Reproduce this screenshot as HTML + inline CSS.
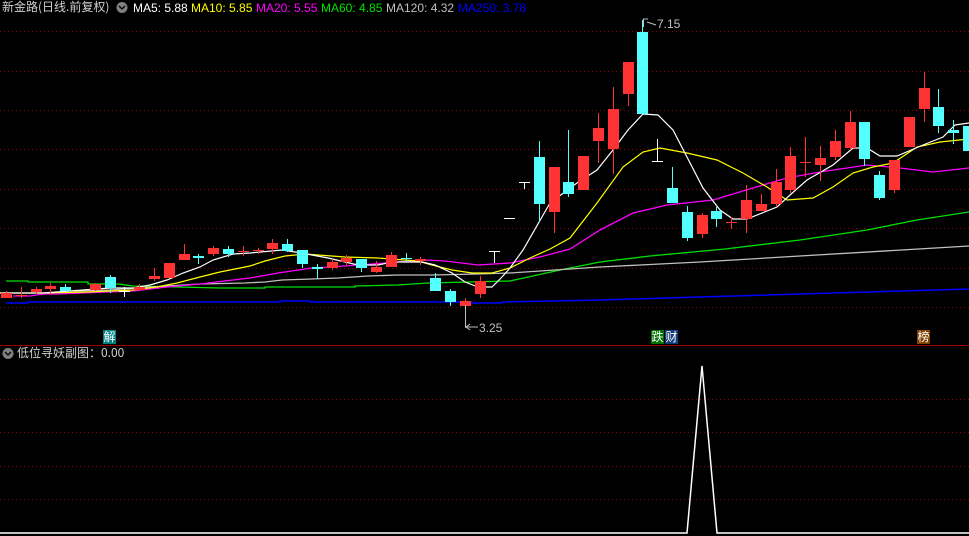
<!DOCTYPE html>
<html><head><meta charset="utf-8"><style>
html,body{margin:0;padding:0;background:#000;width:969px;height:536px;overflow:hidden}
svg{position:absolute;left:0;top:0}
.t{position:absolute;font-family:"Liberation Sans","Noto Sans CJK SC",sans-serif;font-size:12px;white-space:nowrap;line-height:14px}
.lb{position:absolute;font-family:"Noto Sans CJK SC",sans-serif;font-size:12px;color:#fff;width:13px;height:14px;line-height:14px;text-align:center;top:330px}
</style></head><body>
<svg width="969" height="536" xmlns="http://www.w3.org/2000/svg">
<g stroke="#8a0000" stroke-width="1" stroke-dasharray="1,3">
<line x1="0" y1="31.5" x2="969" y2="31.5"/><line x1="0" y1="71.5" x2="969" y2="71.5"/>
<line x1="0" y1="110.5" x2="969" y2="110.5"/><line x1="0" y1="149.5" x2="969" y2="149.5"/>
<line x1="0" y1="189.5" x2="969" y2="189.5"/><line x1="0" y1="228.5" x2="969" y2="228.5"/>
<line x1="0" y1="268.5" x2="969" y2="268.5"/><line x1="0" y1="307.5" x2="969" y2="307.5"/>
<line x1="0" y1="399.5" x2="969" y2="399.5"/><line x1="0" y1="432.5" x2="969" y2="432.5"/>
<line x1="0" y1="466.5" x2="969" y2="466.5"/><line x1="0" y1="499.5" x2="969" y2="499.5"/>
</g>
<line x1="0" y1="345.5" x2="969" y2="345.5" stroke="#a00000" stroke-width="1"/>
<g fill="none" stroke-width="1">
<polyline stroke="#0000ff" stroke-width="1.5" points="6,303 28,303 28,302 280,302 280,301 310,301 310,302 472,302 472,303 502,303 502,302 600,300 700,297 800,294 969,289"/>
<polyline stroke="#00e000" stroke-width="1.3" points="6,281 28,281 28,282 88,282 88,284 118,284 133,286 177,287 220,288 265,288 265,287 355,287 355,286 398,285 428,283 510,281 560,270 600,262 650,256 725,249 800,240 867,230 917,220 969,212"/>
<polyline stroke="#c0c0c0" stroke-width="1.3" points="73,291 110,290 150,287 200,284 245,283 265,282 282,280 312,279 338,278 368,276 398,275 432,275 478,274 510,273 600,267 700,262 800,256 969,246"/>
<polyline stroke="#ff00ff" stroke-width="1.3" points="13,296 30,296 43,294 57,294 83,293 133,291 167,287 200,284 233,280 250,278 278,273 312,268 345,266 385,263 425,260 445,261 478,265 510,263 540,257 570,249 600,230 633,213 667,205 713,200 753,188 787,178 820,172 867,165 900,168 933,172 969,168"/>
<polyline stroke="#ffff00" stroke-width="1.2" points="0,293 43,293 87,292 133,290 157,287 177,283 200,277 220,272 250,266 265,261 285,256 305,254 345,257 378,258 418,261 432,265 452,270 472,273 492,273 510,268 530,258 550,249 570,238 597,203 623,167 643,152 660,148 687,153 717,160 743,173 767,187 787,200 813,198 833,187 853,173 873,167 893,163 917,147 940,142 969,139"/>
<polyline stroke="#ffffff" stroke-width="1.2" points="0,293 43,293 83,290 110,288 133,288 150,285 167,280 183,273 200,267 213,260 233,254 250,253 282,250 295,252 312,255 328,258 345,262 358,265 378,265 392,262 422,262 435,265 452,273 465,282 478,287 492,287 502,277 510,268 523,250 550,203 577,183 597,170 613,150 628,130 643,114 658,115 673,130 703,188 720,210 733,219 747,219 777,207 790,195 807,180 833,165 853,148 867,148 880,156 897,156 923,145 943,137 955,125 969,123"/>
</g>
<g fill="#ff3333">
<rect x="1" y="293" width="11" height="5"/><rect x="6" y="291" width="1" height="7"/>
<rect x="16" y="295" width="11" height="1"/><rect x="21" y="287" width="1" height="11"/>
<rect x="31" y="289" width="11" height="3"/><rect x="36" y="287" width="1" height="7"/>
<rect x="45" y="286" width="11" height="3"/><rect x="50" y="283" width="1" height="11"/>
<rect x="90" y="284" width="11" height="6"/><rect x="95" y="283" width="1" height="8"/>
<rect x="134" y="287" width="11" height="3"/><rect x="139" y="284" width="1" height="7"/>
<rect x="149" y="276" width="11" height="3"/><rect x="154" y="268" width="1" height="13"/>
<rect x="164" y="263" width="11" height="15"/>
<rect x="179" y="254" width="11" height="6"/><rect x="184" y="244" width="1" height="16"/>
<rect x="208" y="248" width="11" height="6"/><rect x="213" y="246" width="1" height="10"/>
<rect x="238" y="251" width="11" height="1"/><rect x="243" y="246" width="1" height="10"/>
<rect x="253" y="250" width="11" height="1"/><rect x="258" y="248" width="1" height="6"/>
<rect x="267" y="243" width="11" height="6"/><rect x="272" y="239" width="1" height="15"/>
<rect x="327" y="262" width="11" height="6"/><rect x="332" y="259" width="1" height="11"/>
<rect x="341" y="258" width="11" height="4"/><rect x="346" y="255" width="1" height="10"/>
<rect x="371" y="267" width="11" height="5"/><rect x="376" y="261" width="1" height="12"/>
<rect x="386" y="255" width="11" height="12"/><rect x="391" y="252" width="1" height="15"/>
<rect x="415" y="259" width="11" height="2"/><rect x="420" y="257" width="1" height="8"/>
<rect x="460" y="301" width="11" height="5"/><rect x="465" y="298" width="1" height="30"/>
<rect x="475" y="281" width="11" height="13"/><rect x="480" y="276" width="1" height="22"/>
<rect x="549" y="167" width="11" height="45"/><rect x="554" y="167" width="1" height="66"/>
<rect x="578" y="156" width="11" height="34"/>
<rect x="593" y="128" width="11" height="13"/><rect x="598" y="113" width="1" height="50"/>
<rect x="608" y="109" width="11" height="40"/><rect x="613" y="87" width="1" height="87"/>
<rect x="623" y="62" width="11" height="32"/><rect x="628" y="62" width="1" height="44"/>
<rect x="697" y="215" width="11" height="19"/><rect x="702" y="213" width="1" height="25"/>
<rect x="726" y="222" width="11" height="1"/><rect x="731" y="217" width="1" height="12"/>
<rect x="741" y="200" width="11" height="19"/><rect x="746" y="185" width="1" height="48"/>
<rect x="756" y="204" width="11" height="7"/><rect x="761" y="194" width="1" height="17"/>
<rect x="771" y="182" width="11" height="22"/><rect x="776" y="169" width="1" height="38"/>
<rect x="785" y="156" width="11" height="34"/><rect x="790" y="147" width="1" height="46"/>
<rect x="800" y="162" width="11" height="1"/><rect x="805" y="137" width="1" height="40"/>
<rect x="815" y="158" width="11" height="7"/><rect x="820" y="146" width="1" height="35"/>
<rect x="830" y="141" width="11" height="16"/><rect x="835" y="130" width="1" height="30"/>
<rect x="845" y="122" width="11" height="26"/><rect x="850" y="111" width="1" height="39"/>
<rect x="889" y="160" width="11" height="30"/><rect x="894" y="160" width="1" height="33"/>
<rect x="904" y="117" width="11" height="30"/>
<rect x="919" y="88" width="11" height="21"/><rect x="924" y="72" width="1" height="50"/>
</g>
<g fill="#54ffff">
<rect x="60" y="287" width="11" height="4"/><rect x="65" y="284" width="1" height="7"/>
<rect x="105" y="277" width="11" height="11"/><rect x="110" y="275" width="1" height="18"/>
<rect x="193" y="256" width="11" height="2"/><rect x="198" y="254" width="1" height="10"/>
<rect x="223" y="249" width="11" height="5"/><rect x="228" y="246" width="1" height="11"/>
<rect x="282" y="244" width="11" height="7"/><rect x="287" y="239" width="1" height="13"/>
<rect x="297" y="250" width="11" height="14"/><rect x="302" y="250" width="1" height="18"/>
<rect x="312" y="267" width="11" height="2"/><rect x="317" y="264" width="1" height="15"/>
<rect x="356" y="259" width="11" height="9"/><rect x="361" y="259" width="1" height="13"/>
<rect x="401" y="258" width="11" height="1"/><rect x="406" y="253" width="1" height="9"/>
<rect x="430" y="278" width="11" height="13"/><rect x="435" y="273" width="1" height="18"/>
<rect x="445" y="291" width="11" height="11"/><rect x="450" y="289" width="1" height="17"/>
<rect x="534" y="157" width="11" height="47"/><rect x="539" y="141" width="1" height="81"/>
<rect x="563" y="182" width="11" height="12"/><rect x="568" y="130" width="1" height="67"/>
<rect x="637" y="32" width="11" height="82"/><rect x="642" y="20" width="1" height="94"/>
<rect x="667" y="188" width="11" height="15"/><rect x="672" y="167" width="1" height="36"/>
<rect x="682" y="212" width="11" height="26"/><rect x="687" y="206" width="1" height="35"/>
<rect x="711" y="211" width="11" height="8"/><rect x="716" y="207" width="1" height="20"/>
<rect x="859" y="122" width="11" height="37"/><rect x="864" y="122" width="1" height="44"/>
<rect x="874" y="175" width="11" height="23"/><rect x="879" y="171" width="1" height="29"/>
<rect x="933" y="107" width="11" height="19"/><rect x="938" y="89" width="1" height="44"/>
<rect x="948" y="130" width="11" height="3"/><rect x="953" y="120" width="1" height="24"/>
<rect x="963" y="126" width="6" height="25"/>
</g>
<g fill="#ffffff">
<rect x="119" y="291" width="11" height="1"/><rect x="124" y="287" width="1" height="10"/>
<rect x="489" y="251" width="11" height="1"/><rect x="494" y="251" width="1" height="12"/>
<rect x="504" y="218" width="11" height="1"/>
<rect x="519" y="182" width="11" height="1"/><rect x="524" y="182" width="1" height="7"/>
<rect x="652" y="161" width="11" height="1"/><rect x="657" y="139" width="1" height="22"/>
</g>
<g stroke="#c0c0c0" fill="none" stroke-width="1">
<polyline points="643.5,27 643.5,19 648,19"/><line x1="647" y1="22" x2="656" y2="25"/>
<polyline points="465.5,305 465.5,327 478,327"/><line x1="466" y1="327" x2="470" y2="324"/><line x1="466" y1="327" x2="470" y2="330"/>
</g>
<polyline fill="none" stroke="#ffffff" stroke-width="1.5" points="0,533 687,533 702,366 717,533 969,533"/>
<circle cx="122" cy="7.5" r="5.5" fill="#808080"/><polyline points="119,6 122,9 125,6" fill="none" stroke="#000" stroke-width="1.3"/>
<circle cx="8" cy="353.5" r="5.5" fill="#808080"/><polyline points="5,352 8,355 11,352" fill="none" stroke="#000" stroke-width="1.3"/>
</svg>
<div class="t" style="left:2px;top:0;color:#d0d0d0;font-family:'Noto Sans CJK SC',sans-serif">新金路(日线.前复权)</div>
<div class="t" style="left:133px;top:1px;color:#fff">MA5: 5.88</div>
<div class="t" style="left:191px;top:1px;color:#ffff00">MA10: 5.85</div>
<div class="t" style="left:256px;top:1px;color:#ff00ff">MA20: 5.55</div>
<div class="t" style="left:321px;top:1px;color:#00e000">MA60: 4.85</div>
<div class="t" style="left:386px;top:1px;color:#c0c0c0">MA120: 4.32</div>
<div class="t" style="left:458px;top:1px;color:#0000ff">MA250: 3.78</div>
<div class="t" style="left:657px;top:17px;color:#c0c0c0">7.15</div>
<div class="t" style="left:479px;top:321px;color:#c0c0c0">3.25</div>
<div class="t" style="left:17px;top:346px;color:#d0d0d0;font-family:'Noto Sans CJK SC',sans-serif">低位寻妖副图：0.00</div>
<div class="lb" style="left:103px;background:#008080">解</div>
<div class="lb" style="left:651px;background:#007000">跌</div>
<div class="lb" style="left:665px;background:#103c78">财</div>
<div class="lb" style="left:917px;background:#804000">榜</div>
</body></html>
